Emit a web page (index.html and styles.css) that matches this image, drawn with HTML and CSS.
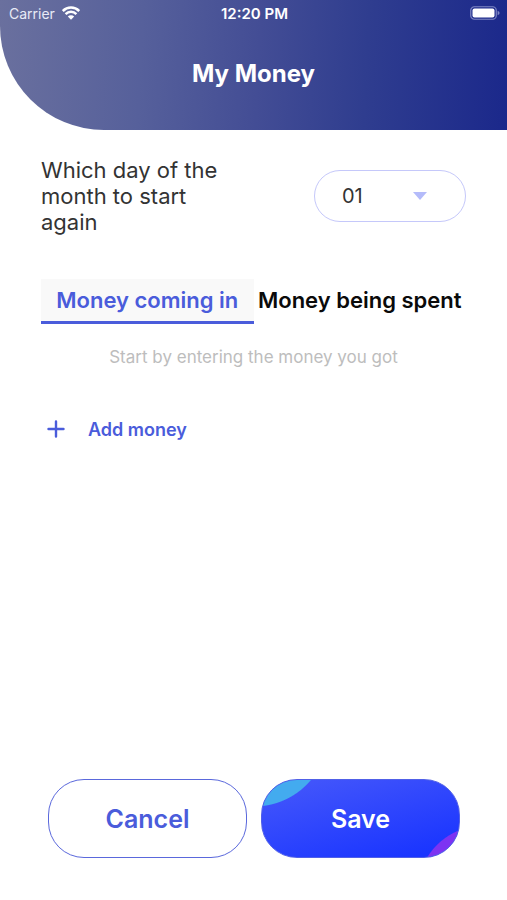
FILE: index.html
```html
<!DOCTYPE html>
<html lang="en">
<head>
<meta charset="utf-8">
<meta name="viewport" content="width=device-width, initial-scale=1">
<title>My Money</title>
<link rel="stylesheet" href="styles.css">
</head>
<body>
<header class="header">
  <div class="status">
    <div class="carrier">
      <span>Carrier</span>
      <svg class="wifi" viewBox="0 0 18 14" aria-hidden="true">
        <path d="M.8 5a11.6 11.6 0 0 1 16.4 0M3.6 8.1a7.6 7.6 0 0 1 10.8 0" fill="none" stroke="#fff" stroke-width="2.5"/>
        <path d="M5.8 10.6a4.6 4.6 0 0 1 6.4 0L9 13.8z" fill="#fff"/>
      </svg>
    </div>
    <time class="clock">12:20 PM</time>
    <svg class="battery" viewBox="0 0 30 14" aria-hidden="true">
      <rect x=".75" y=".75" width="25.5" height="12.5" rx="3.6" fill="none" stroke="#7f87c4" stroke-width="1.2"/>
      <rect x="2.5" y="2.5" width="22" height="9" rx="2" fill="#fff"/>
      <path d="M27.6 4.8q2 .7 2 2.2t-2 2.2z" fill="#7f87c4"/>
    </svg>
  </div>
  <h1 class="title">My Money</h1>
</header>
<main class="content">
  <div class="start-day">
    <label class="start-label" for="day">Which day of the month to start again</label>
    <div class="select-wrap">
      <select class="select" id="day">
        <option>01</option>
        <option>02</option>
        <option>03</option>
      </select>
      <svg class="caret" viewBox="0 0 14 8" aria-hidden="true"><path d="M0 0h14L7 8z" fill="#b4bbfa"/></svg>
    </div>
  </div>
  <div class="tabs" role="tablist">
    <button class="tab tab-active" type="button" role="tab" aria-selected="true">Money coming in</button>
    <button class="tab" type="button" role="tab" aria-selected="false">Money being spent</button>
  </div>
  <p class="hint">Start by entering the money you got</p>
  <button class="add" type="button">
    <svg class="plus" viewBox="0 0 18 18" aria-hidden="true"><path d="M9 1.5v15M1.5 9h15" fill="none" stroke="#4a5cdb" stroke-width="2.4" stroke-linecap="round"/></svg>
    <span>Add money</span>
  </button>
</main>
<footer class="actions">
  <button class="action cancel" type="button">Cancel</button>
  <button class="action save" type="button">Save</button>
</footer>
</body>
</html>
```
FILE: styles.css
```css
* {
  box-sizing: border-box;
}

body {
  margin: 0;
  min-height: 100vh;
  display: flex;
  flex-direction: column;
  background: #fff;
  color: #333;
  font-family: Inter, "Liberation Sans", sans-serif;
}

button,
select {
  font: inherit;
  margin: 0;
}

.header {
  padding-bottom: 40px;
  border-bottom-left-radius: 104px;
  background: linear-gradient(93deg, #6a709e 0%, #56609b 28%, #434d95 51%, #2f3d8f 72%, #1b288b 100%);
  color: #fff;
}

.status {
  display: grid;
  grid-template-columns: 1fr auto 1fr;
  align-items: center;
  height: 26px;
  padding: 0 7px 0 9px;
  font-size: 14px;
}

.carrier {
  display: flex;
  align-items: center;
  gap: 7px;
  color: #e8eaf6;
}

.wifi {
  width: 18px;
  height: 14px;
}

.clock {
  font-size: 15px;
  font-weight: 600;
}

.battery {
  width: 30px;
  height: 14px;
  justify-self: end;
}

.title {
  margin: 32px 0 0;
  font-size: 24px;
  line-height: 32px;
  font-weight: 700;
  text-align: center;
}

.content {
  flex: 1;
  padding: 27px 41px;
}

.start-day {
  display: flex;
  justify-content: space-between;
  align-items: center;
}

.start-label {
  width: 184px;
  font-size: 22px;
  line-height: 26px;
}

.select-wrap {
  position: relative;
  width: 152px;
}

.select {
  appearance: none;
  display: block;
  width: 100%;
  height: 52px;
  padding: 0 27px;
  border: 1px solid #c5c8fa;
  border-radius: 26px;
  background: #fff;
  color: #333;
  font-size: 20px;
}

.caret {
  position: absolute;
  top: 22px;
  right: 39px;
  width: 14px;
  height: 8px;
  pointer-events: none;
}

.tabs {
  display: flex;
  margin-top: 44px;
}

.tab {
  flex: 1;
  height: 45px;
  padding: 0;
  border: 0;
  border-bottom: 3px solid transparent;
  background: none;
  color: #0a0a0a;
  font-size: 22px;
  font-weight: 600;
  white-space: nowrap;
}

.tab-active {
  border-bottom-color: #4a5cdb;
  background: #f9f9f9;
  color: #4a5cdb;
}

.hint {
  margin: 20px 0 0;
  color: #bdbdbd;
  font-size: 17px;
  line-height: 26px;
  text-align: center;
}

.add {
  display: flex;
  align-items: center;
  gap: 23px;
  height: 40px;
  margin-top: 39px;
  padding: 0 6px;
  border: 0;
  background: none;
  color: #4a5cdb;
  font-size: 18px;
  font-weight: 600;
}

.plus {
  width: 18px;
  height: 18px;
}

.actions {
  display: flex;
  gap: 14px;
  padding: 0 47px 42px 48px;
}

.action {
  flex: 1;
  height: 79px;
  padding: 0;
  border-radius: 36px;
  font-size: 25px;
  font-weight: 600;
}

.cancel {
  border: 1px solid #5a68dc;
  background: #fff;
  color: #4a5cdb;
}

.save {
  border: 1px solid #5060e8;
  background:
    radial-gradient(circle at -8px -48px, #43abef 74px, transparent 75px),
    radial-gradient(circle at 222px 112px, #7d33f2 66px, transparent 67px),
    linear-gradient(165deg, #4255fb 10%, #1a35ff 90%);
  color: #fff;
}
```
